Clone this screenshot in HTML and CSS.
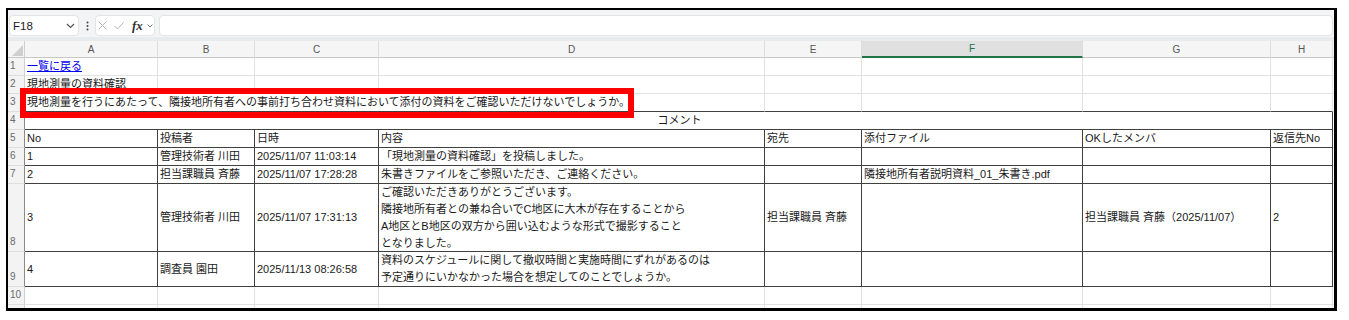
FILE: index.html
```html
<!DOCTYPE html>
<html lang="ja">
<head>
<meta charset="utf-8">
<title>Sheet</title>
<link rel="stylesheet" href="styles.css">
</head>
<body>
<div class="frame">
  <div class="fbar">
    <div class="namebox"><span>F18</span><svg class="chev" width="9" height="6" viewBox="0 0 9 6"><polyline points="1,1 4.5,4.5 8,1" fill="none" stroke="#555" stroke-width="1.2"/></svg></div>
    <div class="more"><svg width="3" height="10" viewBox="0 0 3 10"><circle cx="1.5" cy="1.5" r="1" fill="#444"/><circle cx="1.5" cy="5" r="1" fill="#444"/><circle cx="1.5" cy="8.5" r="1" fill="#444"/></svg></div>
    <div class="fxbox">
      <svg class="ic-x" width="9" height="9" viewBox="0 0 9 9"><path d="M0.5 0.5 L8.5 8.5 M8.5 0.5 L0.5 8.5" stroke="#b4b4b4" stroke-width="1"/></svg>
      <svg class="ic-ok" width="10" height="8" viewBox="0 0 10 8"><polyline points="0.5,4 3.5,7 9.5,0.5" fill="none" stroke="#b4b4b4" stroke-width="1"/></svg>
      <span class="fx">fx</span>
      <svg class="ic-dd" width="6" height="4" viewBox="0 0 6 4"><polyline points="0.5,0.5 3,3 5.5,0.5" fill="none" stroke="#777" stroke-width="1"/></svg>
    </div>
    <div class="finput"></div>
  </div>
  <div class="sheet">
    <div class="corner"><svg width="11" height="11" viewBox="0 0 11 11"><polygon points="11,0 11,11 0,11" fill="#cfcfcf"/></svg></div>
    <div class="ch">A</div><div class="ch">B</div><div class="ch">C</div><div class="ch">D</div><div class="ch">E</div><div class="ch sel">F</div><div class="ch">G</div><div class="ch">H</div><div class="ch x"></div>

    <div class="rh">1</div>
    <div class="c"><span class="link">一覧に戻る</span></div><div class="c"></div><div class="c"></div><div class="c"></div><div class="c"></div><div class="c"></div><div class="c"></div><div class="c"></div><div class="c x"></div>

    <div class="rh">2</div>
    <div class="c">現地測量の資料確認</div><div class="c"></div><div class="c"></div><div class="c"></div><div class="c"></div><div class="c"></div><div class="c"></div><div class="c"></div><div class="c x"></div>

    <div class="rh">3</div>
    <div class="c tb span4">現地測量を行うにあたって、隣接地所有者への事前打ち合わせ資料において添付の資料をご確認いただけないでしょうか。</div><div class="c tb"></div><div class="c tb"></div><div class="c tb"></div><div class="c tb"></div><div class="c x"></div>

    <div class="rh dk">4</div>
    <div class="t span8 center">コメント</div><div class="c x"></div>

    <div class="rh dk">5</div>
    <div class="t">No</div><div class="t">投稿者</div><div class="t">日時</div><div class="t">内容</div><div class="t">宛先</div><div class="t">添付ファイル</div><div class="t">OKしたメンバ</div><div class="t">返信先No</div><div class="c x"></div>

    <div class="rh dk">6</div>
    <div class="t">1</div><div class="t">管理技術者 川田</div><div class="t">2025/11/07 11:03:14</div><div class="t">「現地測量の資料確認」を投稿しました。</div><div class="t"></div><div class="t"></div><div class="t"></div><div class="t"></div><div class="c x"></div>

    <div class="rh dk">7</div>
    <div class="t">2</div><div class="t">担当課職員 斉藤</div><div class="t">2025/11/07 17:28:28</div><div class="t">朱書きファイルをご参照いただき、ご連絡ください。</div><div class="t"></div><div class="t">隣接地所有者説明資料_01_朱書き.pdf</div><div class="t"></div><div class="t"></div><div class="c x"></div>

    <div class="rh dk">8</div>
    <div class="t">3</div><div class="t">管理技術者 川田</div><div class="t">2025/11/07 17:31:13</div><div class="t"><span>ご確認いただきありがとうございます。<br>隣接地所有者との兼ね合いでC地区に大木が存在することから<br>A地区とB地区の双方から囲い込むような形式で撮影すること<br>となりました。</span></div><div class="t">担当課職員 斉藤</div><div class="t"></div><div class="t">担当課職員 斉藤（2025/11/07）</div><div class="t">2</div><div class="c x"></div>

    <div class="rh dk">9</div>
    <div class="t">4</div><div class="t">調査員 園田</div><div class="t">2025/11/13 08:26:58</div><div class="t"><span>資料のスケジュールに関して撤収時間と実施時間にずれがあるのは<br>予定通りにいかなかった場合を想定してのことでしょうか。</span></div><div class="t"></div><div class="t"></div><div class="t"></div><div class="t"></div><div class="c x"></div>

    <div class="rh">10</div>
    <div class="c"></div><div class="c"></div><div class="c"></div><div class="c"></div><div class="c"></div><div class="c"></div><div class="c"></div><div class="c"></div><div class="c x"></div>

    <div class="rh"></div>
    <div class="c"></div><div class="c"></div><div class="c"></div><div class="c"></div><div class="c"></div><div class="c"></div><div class="c"></div><div class="c"></div><div class="c x"></div>
  </div>
  <div class="redbox"></div>
</div>
</body>
</html>
```

FILE: styles.css
```css
* { box-sizing: border-box; }
html, body { margin: 0; background: #fff; }
body { font-family: "Liberation Sans", "Noto Sans CJK JP", sans-serif; }

.frame {
  position: relative;
  margin: 8px 0 0 6px;
  width: 1331px;
  height: 303px;
  border: 2px solid #000;
  border-right-width: 3px;
  border-bottom-width: 3px;
  overflow: hidden;
  background: #fff;
}

.fbar {
  display: flex;
  align-items: flex-start;
  height: 31px;
  padding: 5px 1px 0 1px;
  background: #f3f4f5;
  border-bottom: 4px solid #e8ebee;
}
.namebox {
  width: 70px;
  height: 21px;
  background: #fff;
  border: 1px solid #e4e4e4;
  border-radius: 4px;
  display: flex;
  align-items: center;
  justify-content: space-between;
  padding: 0 3px 0 3px;
  font-size: 11.5px;
  color: #222;
}
.more {
  width: 16px;
  height: 21px;
  display: flex;
  align-items: center;
  justify-content: center;
}
.fxbox {
  width: 60px;
  height: 21px;
  background: #fff;
  border: 1px solid #e4e4e4;
  border-radius: 4px;
  display: flex;
  align-items: center;
}
.ic-x { margin-left: 2px; }
.ic-ok { margin-left: 7px; }
.fx {
  margin-left: 8px;
  font-family: "Liberation Serif", serif;
  font-style: italic;
  font-weight: bold;
  font-size: 13px;
  color: #333;
  line-height: 12px;
}
.ic-dd { margin-left: 4px; }
.finput {
  flex: 1;
  height: 21px;
  margin-left: 4px;
  background: #fff;
  border: 1px solid #e4e4e4;
  border-radius: 4px;
}

.sheet {
  display: grid;
  grid-template-columns: 17px 133px 97px 124px 386px 97px 221px 188px 62px 1fr;
  grid-template-rows: 17px repeat(7, 18px) 68px 35px 18px 18px;
  font-size: 11px;
  color: #1a1a1a;
}
.corner {
  background: #f5f5f5;
  border-right: 1px solid #cfcfcf;
  border-bottom: 1px solid #c8c8c8;
  display: flex;
  justify-content: flex-end;
  align-items: flex-end;
  padding: 0 1px 1px 0;
}
.ch {
  background: #f5f5f5;
  border-right: 1px solid #dcdcdc;
  border-bottom: 1px solid #c8c8c8;
  display: flex;
  align-items: center;
  justify-content: center;
  font-size: 10px;
  color: #555;
}
.ch.sel {
  background: #e0e0e0;
  color: #217346;
  border-bottom: 2px solid #217346;
}
.ch.x { border-right: none; }

.rh {
  background: #f3f3f3;
  border-right: 1px solid #cfcfcf;
  border-bottom: 1px solid #dedede;
  display: flex;
  align-items: flex-end;
  padding: 0 0 3px 2px;
  font-size: 10px;
  line-height: 12px;
  color: #6b6b6b;
}
.rh.dk { border-right-color: #8a8a8a; }

.c, .t {
  display: flex;
  align-items: center;
  padding-left: 2px;
  white-space: nowrap;
  line-height: 17px;
}
.c {
  border-right: 1px solid #e2e2e2;
  border-bottom: 1px solid #e2e2e2;
}
.c.tb { border-bottom-color: #404040; }
.c.x { border-right: none; }
.t {
  border-right: 1px solid #404040;
  border-bottom: 1px solid #404040;
}
.span4 { grid-column: span 4; }
.span8 { grid-column: span 8; }
.center { justify-content: center; }
.link { color: #0000ee; text-decoration: underline; }

.redbox {
  position: absolute;
  left: 12px;
  top: 78px;
  width: 614px;
  height: 30px;
  border: 6px solid #ff0000;
}
```
